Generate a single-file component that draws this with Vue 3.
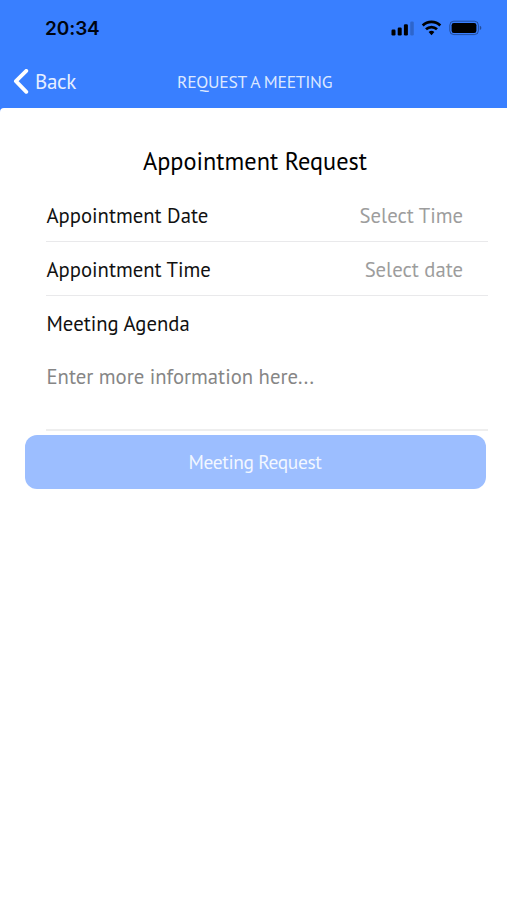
<!-- Appointment request screen: status bar, nav bar and meeting form -->
<template>
  <div class="screen">
    <header class="top">
      <div class="status">
        <span class="clock">20:34</span>
        <svg class="status-icons" width="92" height="20" viewBox="0 0 92 20">
          <!-- Signal -->
          <rect x="1.5" y="11.5" width="4" height="6" rx="1.2" />
          <rect x="7.7" y="9.5" width="4" height="8" rx="1.2" />
          <rect x="13.9" y="6.3" width="4" height="11.2" rx="1.2" />
          <rect x="20.2" y="3.5" width="3.6" height="14" rx="1.2" opacity=".2" />
          <!-- Wifi -->
          <g fill="none" stroke="#000" stroke-width="2.7">
            <path d="M32.7 7.5a12.6 12.6 0 0 1 17.6 0" />
            <path d="M36 11.3a8 8 0 0 1 11 0" />
          </g>
          <path d="M38.6 14.1a4.3 4.3 0 0 1 5.8 0L41.5 17.2z" />
          <!-- Battery -->
          <rect x="59.8" y="3.2" width="28.6" height="13.4" rx="4" fill="none" stroke="#000" stroke-opacity=".38" />
          <rect x="61.6" y="5" width="24.8" height="10" rx="2.2" />
          <path d="M89.8 7.7q1.6.6 1.6 2.2t-1.6 2.2z" opacity=".4" />
        </svg>
      </div>
      <nav class="nav">
        <button class="back" type="button">
          <svg width="16" height="26" viewBox="0 0 16 26">
            <path d="M13.3 1.8 2.9 12.2l10.4 10.6" />
          </svg>
          <span>Back</span>
        </button>
        <span class="nav-title">REQUEST A MEETING</span>
      </nav>
    </header>

    <main class="sheet">
      <h1 class="title">Appointment Request</h1>

      <div class="form">
        <div v-for="row in rows" :key="row.label" class="row">
          <span>{{ row.label }}</span>
          <span class="hint">{{ row.hint }}</span>
        </div>
        <div class="agenda">
          <div class="agenda-label">Meeting Agenda</div>
          <div class="agenda-input">Enter more information here...</div>
        </div>
      </div>

      <button class="submit" type="button">Meeting Request</button>
    </main>
  </div>
</template>

<script setup>
const rows = [
  { label: 'Appointment Date', hint: 'Select Time' },
  { label: 'Appointment Time', hint: 'Select date' },
]
</script>

<style>
body { margin: 0; background: #fff; }
</style>

<style scoped>
.screen {
  width: 507px; height: 900px;
  background: #397fff;
  font-family: "PT Sans", "Noto Sans", sans-serif;
  color: #111;
  display: flex; flex-direction: column;
  overflow: hidden;
}
button { border: 0; padding: 0; background: none; font-family: inherit; color: inherit; }

/* Header */
.top { height: 108px; flex: none; }
.status {
  height: 56px; box-sizing: border-box;
  padding: 0 25px 0 45px;
  display: flex; align-items: center; justify-content: space-between;
}
.clock { padding-top: 2px; font: 600 19px/24px Inter, sans-serif; letter-spacing: -.1px; color: #000510; }
.nav {
  height: 52px; padding-left: 13px;
  display: grid; grid-template-columns: 164px 1fr; align-items: center;
}
.back {
  display: flex; align-items: center; gap: 6px;
  font-size: 21px; line-height: 28px; letter-spacing: -.3px; color: #e6efff;
}
.back path { fill: none; stroke: #fff; stroke-width: 3.8; stroke-linecap: round; stroke-linejoin: round; }
.nav-title { font-size: 17.6px; line-height: 24px; letter-spacing: -.28px; color: #dce8ff; }

/* Sheet */
.sheet { flex: 1; background: #fff; border-radius: 4px 0 0 0; }
.title {
  margin: 0; padding: 36px 0 0 3px;
  height: 43px; line-height: 34px;
  font-size: 24.3px; font-weight: 400; text-align: center; color: #000;
}

.form { margin: 0 19px 0 46px; font-size: 20.7px; line-height: 28px; }
.row {
  height: 54px; box-sizing: border-box;
  padding: 3px 25px 0 .5px;
  border-bottom: 1.5px solid #e9e9eb;
  display: flex; align-items: center; justify-content: space-between;
}
.row:first-child { height: 55px; padding-top: 4px; }
.hint { color: #9d9d9d; }
.agenda { height: 135px; box-sizing: border-box; padding-left: .5px; border-bottom: 2px solid #eee; }
.agenda-label { padding-top: 14px; }
.agenda-input { padding-top: 25px; color: #868686; }

.submit {
  display: block;
  width: 461px; height: 54px; margin: 4px 0 0 24.5px;
  border-radius: 12px;
  background: #9cbeff;
  font-size: 19.4px; line-height: 26px; letter-spacing: -.38px; color: #f2f7ff;
}
</style>
